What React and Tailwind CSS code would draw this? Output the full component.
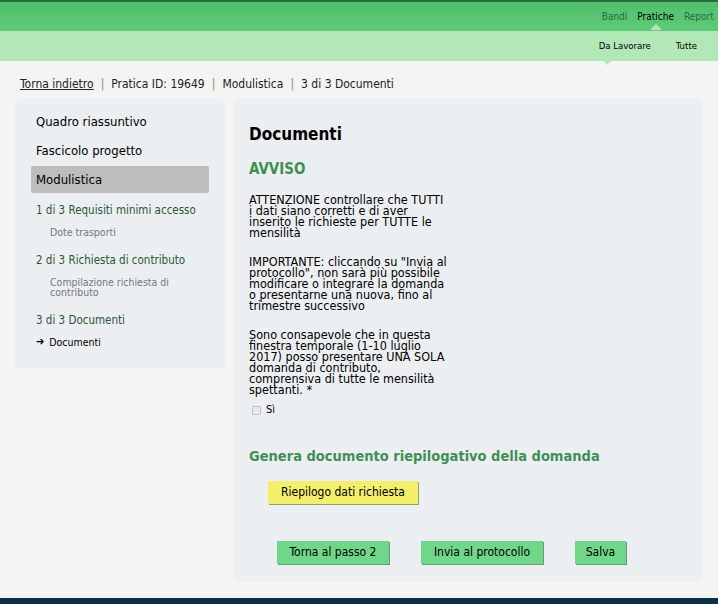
const steps = [
  { title: '1 di 3 Requisiti minimi accesso', sub: ['Dote trasporti'] },
  { title: '2 di 3 Richiesta di contributo', sub: ['Compilazione richiesta di', 'contributo'] },
]

const avviso = [
  ['ATTENZIONE controllare che TUTTI', 'i dati siano corretti e di aver', 'inserito le richieste per TUTTE le', 'mensilità'],
  ['IMPORTANTE: cliccando su "Invia al', 'protocollo", non sarà più possibile', 'modificare o integrare la domanda', 'o presentarne una nuova, fino al', 'trimestre successivo'],
  ['Sono consapevole che in questa', 'finestra temporale (1-10 luglio', '2017) posso presentare UNA SOLA', 'domanda di contributo,', 'comprensiva di tutte le mensilità', 'spettanti. *'],
]

const font = { fontFamily: '"DejaVu Sans Condensed", Tahoma, sans-serif' }

export default function App() {
  return (
    <div className="w-[718px] h-[604px] overflow-hidden bg-[#f4f4f4] text-black flex flex-col" style={font}>
      {/* header */}
      <div className="h-[2px] bg-[#2f6b3f]" />
      <div className="relative h-[29px] bg-gradient-to-b from-[#4fc06c] to-[#5fca78] flex items-center justify-end gap-[10px] text-[10px]">
        <span className="text-[#2f6a40]">Bandi</span>
        <span className="relative text-black">
          Pratiche
          <span className="absolute left-1/2 -translate-x-1/2 top-[15px] w-0 h-0 border-x-[6px] border-x-transparent border-b-[6px] border-b-[#b2e8b8]" />
        </span>
        <span className="text-[#2f6a40] w-[34px] overflow-hidden whitespace-nowrap">Report</span>
      </div>
      <div className="relative h-[30px] bg-[#b2e8b8] flex items-center justify-end gap-[25px] pr-[21px] text-[9.5px]">
        <span className="relative">
          Da Lavorare
          <span className="absolute left-[1px] top-[19px] w-0 h-0 border-x-[7px] border-x-transparent border-t-[7px] border-t-[#b2e8b8]" />
        </span>
        <span>Tutte</span>
      </div>

      {/* breadcrumb */}
      <div className="pl-[20px] pt-[14px] h-[38px] text-[12px] text-[#222]">
        <span className="underline">Torna indietro</span>
        <span className="text-[#888] mx-[7px]">|</span>
        Pratica ID: 19649
        <span className="text-[#888] mx-[7px]">|</span>
        Modulistica
        <span className="text-[#888] mx-[7px]">|</span>
        3 di 3 Documenti
      </div>

      <div className="flex gap-[9px] pl-[15px] items-start">
        {/* sidebar */}
        <div className="w-[210px] bg-[#eceff1] rounded-[3px] pt-[8px] pb-[19px] px-[16px]">
          <div className="pl-[5px] text-[13px] h-[29px] flex items-center">Quadro riassuntivo</div>
          <div className="pl-[5px] text-[13px] h-[29px] flex items-center">Fascicolo progetto</div>
          <div className="pl-[5px] text-[13px] h-[27px] mt-[1px] flex items-center bg-[#bdbdbd] rounded-[2px] w-[178px]">Modulistica</div>
          <div className="mt-[9px] pl-[5px] flex flex-col">
            {steps.map((s) => (
              <div key={s.title} className="mb-[15px]">
                <div className="text-[11.5px] leading-[16px] text-[#2c5536]">{s.title}</div>
                <div className="pl-[14px] mt-[9px] text-[10.5px] leading-[10px] text-[#777]">
                  {s.sub.map((t) => (
                    <div key={t}>{t}</div>
                  ))}
                </div>
              </div>
            ))}
            <div className="text-[11.5px] leading-[16px] text-[#2c5536]">3 di 3 Documenti</div>
            <div className="mt-[7px] text-[10.5px] leading-[14px] flex items-center gap-[5px]">
              <span className="text-[11px] font-bold">➔</span>Documenti
            </div>
          </div>
        </div>

        {/* main panel */}
        <div className="w-[469px] h-[482px] bg-[#eceff1] rounded-[4px] pl-[15px] pt-[24px]">
          <h1 className="text-[17px] font-bold leading-[22px]">Documenti</h1>
          <h2 className="mt-[14px] text-[15px] font-bold text-[#3f8f55] leading-[20px]">AVVISO</h2>
          <div className="text-[12.5px] leading-[11px] mt-[15px] flex flex-col gap-[18px]">
            {avviso.map((p, i) => (
              <p key={i}>
                {p.map((l) => (
                  <span key={l} className="block whitespace-nowrap">{l}</span>
                ))}
              </p>
            ))}
          </div>
          <label className="flex items-center gap-[5px] mt-[8px] pl-[3px] text-[11px] h-[14px]">
            <span className="w-[9px] h-[9px] border border-[#c4c4c4] bg-[#e8e8e8] rounded-[1px]" />
            Sì
          </label>
          <h2 className="mt-[29px] text-[14.5px] font-bold text-[#3f8f55] leading-[20px]">Genera documento riepilogativo della domanda</h2>
          <div className="mt-[13px] pl-[19px]">
            <button className="h-[23px] px-[13px] bg-[#f3ee6c] text-[12px] shadow-[1px_1px_0_#9a9a6a]">Riepilogo dati richiesta</button>
          </div>
          <div className="mt-[37px] pl-[28px] flex gap-[32px]">
            <button className="h-[23px] w-[112px] bg-[#70d68a] text-[12px] shadow-[1px_1px_0_#6a9a72]">Torna al passo 2</button>
            <button className="h-[23px] w-[122px] bg-[#70d68a] text-[12px] shadow-[1px_1px_0_#6a9a72]">Invia al protocollo</button>
            <button className="h-[23px] w-[51px] bg-[#70d68a] text-[12px] shadow-[1px_1px_0_#6a9a72]">Salva</button>
          </div>
        </div>
      </div>

      <div className="flex-1" />
      <div className="h-[6px] bg-[#0b3049]" />
    </div>
  )
}
